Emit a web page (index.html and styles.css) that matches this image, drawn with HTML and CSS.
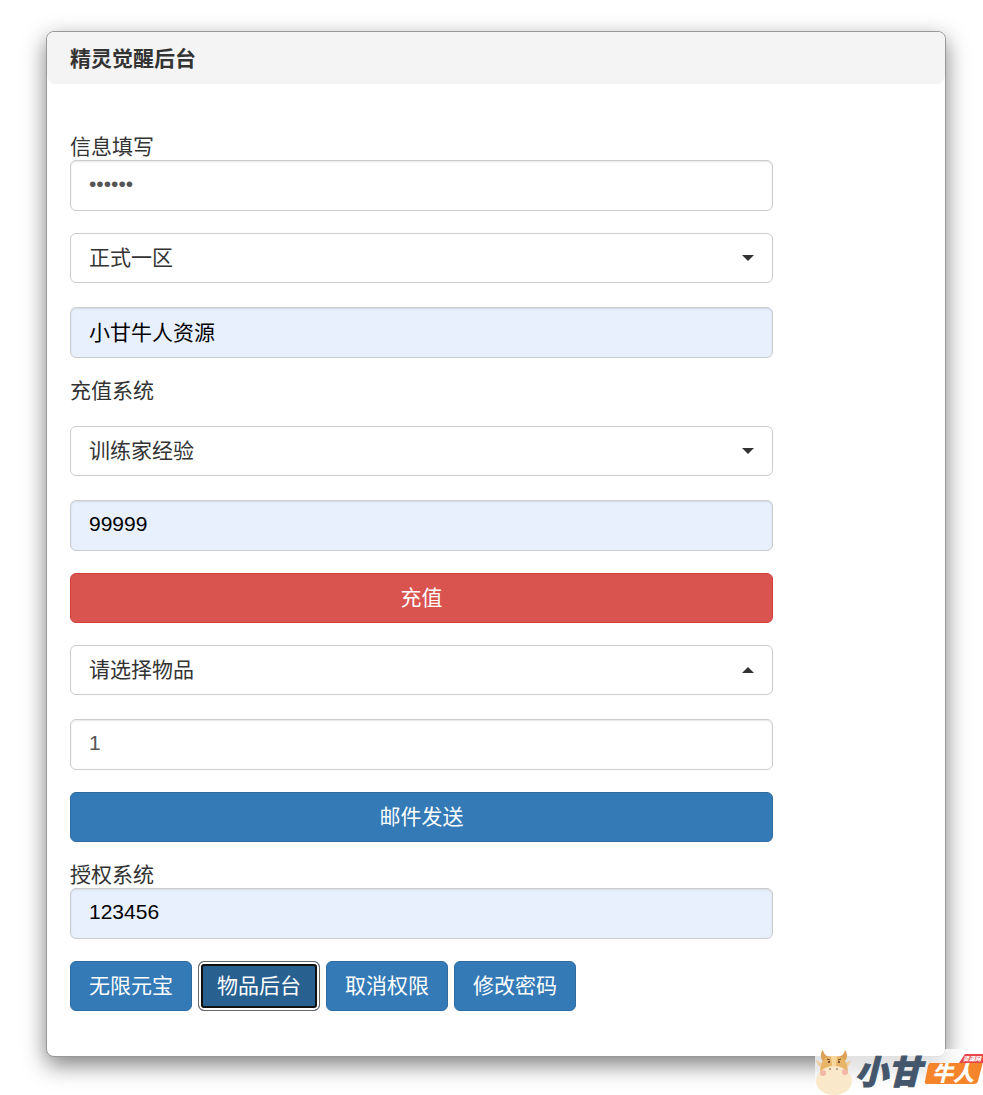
FILE: index.html
```html
<!DOCTYPE html>
<html lang="zh-CN">
<head>
  <meta charset="UTF-8">
  <meta name="viewport" content="width=device-width, initial-scale=1">
  <title>精灵觉醒后台</title>
  <link rel="stylesheet" href="styles.css">
</head>
<body>

  <div class="panel">
    <h1 class="panel-header">精灵觉醒后台</h1>

    <form class="panel-body">
      <label class="form-label" for="adminPwd">信息填写</label>
      <input class="form-control" id="adminPwd" type="password" value="123456">

      <div class="select">
        <select class="btn btn-default" aria-label="区服">
          <option>正式一区</option>
        </select>
      </div>

      <input class="form-control filled" type="text" value="小甘牛人资源" aria-label="角色名">

      <label class="form-label spaced" for="chargeType">充值系统</label>
      <div class="select">
        <select class="btn btn-default" id="chargeType">
          <option>训练家经验</option>
        </select>
      </div>

      <input class="form-control filled" type="text" value="99999" aria-label="充值数量">
      <button type="button" class="btn btn-danger btn-block">充值</button>

      <div class="select dropup">
        <select class="btn btn-default" aria-label="物品">
          <option>请选择物品</option>
        </select>
      </div>

      <input class="form-control" type="text" value="1" aria-label="物品数量">
      <button type="button" class="btn btn-primary btn-block">邮件发送</button>

      <label class="form-label" for="userPwd">授权系统</label>
      <input class="form-control filled" id="userPwd" type="text" value="123456">

      <div class="buttons">
        <button type="button" class="btn btn-primary">无限元宝</button>
        <button type="button" class="btn btn-primary active">物品后台</button>
        <button type="button" class="btn btn-primary">取消权限</button>
        <button type="button" class="btn btn-primary">修改密码</button>
      </div>
    </form>
  </div>

  <div class="watermark">
    <svg width="168" height="46" viewBox="0 0 168 46">
      <!-- cow head -->
      <path d="M9 14C5 9 5 4 8 1c1 4 3 6 7 7zM28 14c5-4 5-9 2-13-1 4-3 6-7 7z" fill="#dda157"/>
      <path d="M8 15L1 11c1 4 2 6 6 7zM29 15l7-4c-1 4-2 6-6 7z" fill="#efcfa0"/>
      <path d="M5 24C5 13 9 7 19 7s14 6 14 17z" fill="#e9b566"/>
      <path d="M16 7h6l-1 10h-4z" fill="#f6d89f"/>
      <path d="M1 32c0-8 8-15 18-15s18 7 18 15-8 14-18 14S1 40 1 32z" fill="#fae8cb"/>
      <path d="M12 10l3 1M26 10l-3 1" stroke="#6b4526" stroke-width="1"/>
      <circle cx="14" cy="13" r="1" fill="#4b3428"/>
      <circle cx="24" cy="13" r="1" fill="#4b3428"/>
      <circle cx="15" cy="20" r="1" fill="#a58c72"/>
      <circle cx="22" cy="20" r="1" fill="#a58c72"/>
      <circle cx="8" cy="24" r="3" fill="#f2b7a5"/>
      <circle cx="30" cy="23" r="3" fill="#f2b7a5"/>
      <!-- name -->
      <text class="logo-name" x="40" y="35">小甘</text>
      <path d="M115 14h29l4-1h20l-5 19q-1 3-4 3h-47q-3 0-2-3l3-15q1-3 2-3z" fill="#f5842b"/>
      <path d="M150 5h18v9h-24z" fill="#e8474a"/>
      <text class="logo-tag" x="117" y="32">牛人</text>
      <text class="logo-small" x="148" y="12">资源网</text>
    </svg>
  </div>

</body>
</html>
```
FILE: styles.css
```css
* {
  box-sizing: border-box;
}

body {
  margin: 0;
  padding: 31px 37px 38px 46px;
  background: #fff;
  color: #333;
  font-family: "Liberation Sans", "Noto Sans CJK SC", sans-serif;
  font-size: 21px;
  line-height: 28px;
}

.panel {
  background: #fff;
  border: 1px solid #999;
  border-radius: 8px;
  box-shadow: 0 8px 22px rgba(0, 0, 0, 0.5);
}

.panel-header {
  margin: 0;
  padding: 13px 23px 11px;
  background: #f4f4f4;
  border-radius: 8px;
  font-size: 21px;
  line-height: 28px;
  font-weight: bold;
}

.panel-body {
  display: flex;
  flex-direction: column;
  padding: 52px 172px 45px 23px;
}

.form-label {
  margin-top: -4px;
  padding-top: 2px;
  line-height: 26px;
}

.form-label.spaced {
  margin-bottom: 22px;
}

.form-control {
  width: 100%;
  height: 51px;
  margin: 0 0 22px;
  padding: 6px 18px 9px;
  background: #fff;
  border: 1px solid #ccc;
  border-radius: 6px;
  box-shadow: inset 0 1px 2px rgba(0, 0, 0, 0.1);
  color: #555;
  font: inherit;
}

.form-control.filled {
  background: #e8f0fe;
  color: #000;
}

.btn {
  height: 50px;
  padding: 8px 18px;
  border: 1px solid transparent;
  border-radius: 6px;
  font: inherit;
  cursor: pointer;
}

.btn-block {
  width: 100%;
  margin: 0 0 22px;
}

.btn-default {
  display: block;
  width: 100%;
  appearance: none;
  background: #fff;
  border-color: #ccc;
  color: #333;
}

.btn-primary {
  background: #337ab7;
  border-color: #2e6da4;
  color: #fff;
}

.btn-danger {
  background: #d9534f;
  border-color: #d43f3a;
  color: #fff;
}

.btn-primary.active {
  background: #286090;
  border-color: #666;
  box-shadow: inset 0 0 0 2px #fff, inset 0 0 0 4px #101010;
}

.select {
  position: relative;
  margin-bottom: 24px;
}

/* caret */
.select::after {
  content: "";
  position: absolute;
  top: 22px;
  right: 19px;
  border: 6px solid transparent;
  border-top-color: #333;
  border-bottom: 0;
  pointer-events: none;
}

.select.dropup::after {
  border-top: 0;
  border-bottom: 6px solid #333;
}

.buttons {
  display: flex;
  flex-wrap: wrap;
  gap: 6px;
}

.watermark {
  position: absolute;
  right: 0;
  top: 1049px;
  height: 46px;
  background: linear-gradient(rgba(255, 255, 255, 0.8), rgba(255, 255, 255, 0.3));
}

.watermark svg {
  display: block;
}

.watermark text {
  font-family: "Noto Sans CJK SC", sans-serif;
  font-weight: 900;
  font-style: italic;
}

.logo-name {
  fill: #43566b;
  stroke: #43566b;
  stroke-width: 1px;
  font-size: 33px;
}

.logo-tag {
  fill: #fff;
  font-size: 21px;
}

.logo-small {
  fill: #fff;
  font-size: 6px;
}
```
